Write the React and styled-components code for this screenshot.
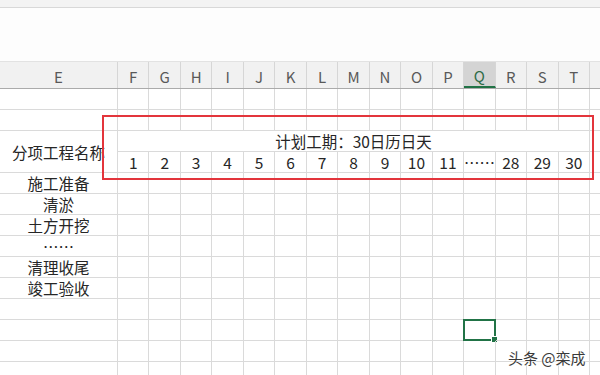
import React from 'react'
import styled, { createGlobalStyle } from 'styled-components'

const GlobalStyle = createGlobalStyle`
  html, body {
    margin: 0;
    padding: 0;
    background: #ffffff;
  }
  body {
    font-family: 'Noto Sans CJK SC', 'Noto Sans', sans-serif;
  }
`

const COLS = ['F', 'G', 'H', 'I', 'J', 'K', 'L', 'M', 'N', 'O', 'P', 'Q', 'R', 'S', 'T']
const NUMBERS = ['1', '2', '3', '4', '5', '6', '7', '8', '9', '10', '11', '……', '28', '29', '30']
const TASKS = ['施工准备', '清淤', '土方开挖', '……', '清理收尾', '竣工验收']
const GRID_COLS = '118px repeat(15, 31.47px) 12px'

const Screen = styled.div`
  position: relative;
  width: 600px;
  height: 375px;
  overflow: hidden;
  background: #ffffff;
`

const TopStrip = styled.div`
  height: 7px;
  background: #f3f3f3;
  border-bottom: 1px solid #d8d8d8;
`

const FormulaArea = styled.div`
  height: 53px;
  background: #fdfdfd;
`

const HeaderRow = styled.div`
  display: grid;
  grid-template-columns: ${GRID_COLS};
  height: 28px;
  background: #f1f1f1;
  border-top: 1px solid #e2e2e2;
  border-bottom: 1px solid #ababab;
  box-sizing: border-box;
`

const HeaderCell = styled.div`
  display: flex;
  align-items: center;
  justify-content: center;
  box-sizing: border-box;
  border-right: 1px solid #d6d6d6;
  font-size: 15px;
  color: ${p => (p.$active ? '#2f6b47' : '#595959')};
  background: ${p => (p.$active ? '#d4d4d4' : 'transparent')};
  border-bottom: ${p => (p.$active ? '2px solid #217346' : 'none')};
  padding-top: 2px;
`

const Sheet = styled.div`
  position: relative;
  display: grid;
  grid-template-columns: ${GRID_COLS};
  grid-auto-rows: 21px;
`

const Cell = styled.div`
  position: relative;
  display: flex;
  align-items: center;
  justify-content: center;
  box-sizing: border-box;
  border-right: 1px solid ${p => (p.$noRight ? 'transparent' : '#dadada')};
  border-bottom: 1px solid #dadada;
  font-size: 15.5px;
  color: #262626;
  white-space: nowrap;
  grid-column: ${p => p.$colSpan ? `span ${p.$colSpan}` : 'auto'};
  grid-row: ${p => p.$rowSpan ? `span ${p.$rowSpan}` : 'auto'};
`

const Selection = styled.div`
  position: absolute;
  left: -1px;
  top: -1px;
  right: -1px;
  bottom: -1px;
  border: 2px solid #217346;

  &::after {
    content: '';
    position: absolute;
    right: -4px;
    bottom: -4px;
    width: 5px;
    height: 5px;
    background: #217346;
    border: 1px solid #ffffff;
  }
`

const Highlight = styled.div`
  position: absolute;
  left: 102px;
  top: 26px;
  width: 492px;
  height: 65px;
  box-sizing: border-box;
  border: 2px solid #e3353c;
  pointer-events: none;
`

const Watermark = styled.div`
  position: absolute;
  left: 508px;
  top: 347px;
  font-size: 15px;
  color: #3a3a3a;
  white-space: nowrap;
  text-shadow: 0 0 2px #ffffff, 0 0 2px #ffffff;
`

function emptyRow(key, selectedCol) {
  const cells = []
  for (let i = 0; i < 17; i++) {
    cells.push(
      <Cell key={`${key}-${i}`} $noRight={i === 16}>
        {selectedCol === i ? <Selection /> : null}
      </Cell>
    )
  }
  return cells
}

export default function App() {
  const cells = []

  cells.push(...emptyRow('r1'))
  cells.push(...emptyRow('r2'))

  // row 3 + 4: merged name cell and title spanning F..T
  cells.push(<Cell key="name" $rowSpan={2}>分项工程名称</Cell>)
  cells.push(<Cell key="title" $colSpan={15}>计划工期：30日历日天</Cell>)
  cells.push(<Cell key="r3-u" $noRight />)
  NUMBERS.forEach((n, i) => {
    cells.push(<Cell key={`num-${i}`}>{n}</Cell>)
  })
  cells.push(<Cell key="r4-u" $noRight />)

  TASKS.forEach((t, r) => {
    cells.push(<Cell key={`task-${r}`}>{t}</Cell>)
    for (let i = 1; i < 17; i++) {
      cells.push(<Cell key={`task-${r}-${i}`} $noRight={i === 16} />)
    }
  })

  cells.push(...emptyRow('r11'))
  cells.push(...emptyRow('r12', 12))
  cells.push(...emptyRow('r13'))
  cells.push(...emptyRow('r14'))

  return (
    <Screen>
      <GlobalStyle />
      <TopStrip />
      <FormulaArea />
      <HeaderRow>
        <HeaderCell>E</HeaderCell>
        {COLS.map(c => (
          <HeaderCell key={c} $active={c === 'Q'}>{c}</HeaderCell>
        ))}
        <HeaderCell />
      </HeaderRow>
      <Sheet>
        {cells}
        <Highlight />
      </Sheet>
      <Watermark>头条 @栾成</Watermark>
    </Screen>
  )
}
